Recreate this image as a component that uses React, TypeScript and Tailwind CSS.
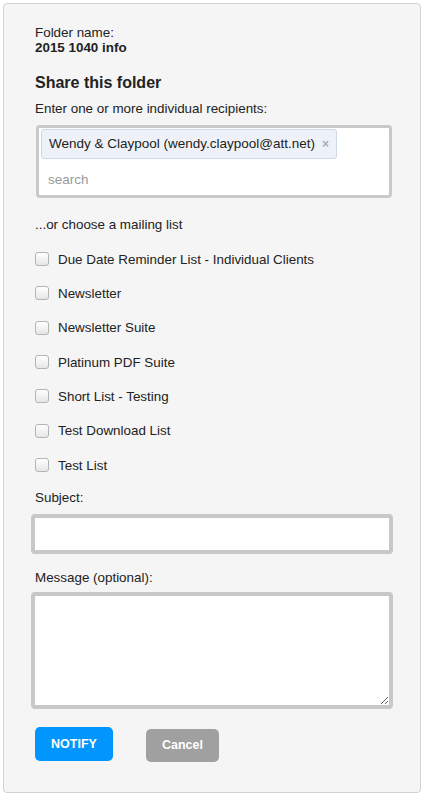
import React from "react";

const lists = [
  "Due Date Reminder List - Individual Clients",
  "Newsletter",
  "Newsletter Suite",
  "Platinum PDF Suite",
  "Short List - Testing",
  "Test Download List",
  "Test List",
];

export default function App() {
  return (
    <div className="w-[425px] h-[795px] bg-white pt-[3px] pl-[3px] font-['Liberation_Sans',Arial,sans-serif] text-[#222]">
      <div className="w-[418px] h-[790px] border border-[#d2d2d2] rounded-[4px] bg-[#f5f5f5] pt-[21px] pl-[31px]">
        <div className="text-[13.4px] leading-[15px]">Folder name:</div>
        <div className="text-[13.4px] leading-[15px] font-bold">2015 1040 info</div>
        <div className="mt-[18px] text-[16px] leading-[20px] font-bold">Share this folder</div>
        <div className="mt-[8px] text-[13.4px] leading-[15px]">Enter one or more individual recipients:</div>
        <div className="mt-[9px] ml-[1px] w-[356px] h-[73px] border-[3px] border-[#c9c9c9] rounded-[4px] bg-white">
          <div className="mt-[1px] ml-[2px] w-[296px] h-[30px] rounded-[3px] border border-[#cfd8e6] bg-[#eef2f8] flex items-center pl-[7px] text-[13.5px]">
            <span>Wendy &amp; Claypool (wendy.claypool@att.net)</span>
            <span className="ml-[7px] text-[12px] font-bold text-[#a2aec0]">×</span>
          </div>
          <div className="mt-[13px] ml-[9px] text-[13.5px] leading-[15px] text-[#9a9a9a]">search</div>
        </div>
        <div className="mt-[19px] text-[13.4px] leading-[15px]">...or choose a mailing list</div>
        <div className="mt-[10px]">
          {lists.map((l) => (
            <div key={l} className="h-[34.33px] flex items-center">
              <span className="w-[14px] h-[14px] rounded-[3px] border border-[#b4b4b4] bg-gradient-to-b from-white to-[#e6e6e6] shrink-0" />
              <span className="ml-[9px] text-[13.4px] leading-[15px]">{l}</span>
            </div>
          ))}
        </div>
        <div className="mt-[8px] text-[13.4px] leading-[15px]">Subject:</div>
        <input
          type="text"
          className="block mt-[9px] -ml-[4px] w-[362px] h-[40px] border-[4px] border-[#c8c8c8] rounded-[4px] bg-white outline-none"
        />
        <div className="mt-[16px] text-[13.4px] leading-[15px]">Message (optional):</div>
        <textarea className="block mt-[7px] -ml-[4px] w-[362px] h-[117px] border-[4px] border-[#c8c8c8] rounded-[4px] bg-white outline-none" />
        <div className="mt-[18px] flex items-start">
          <button className="w-[78px] h-[34px] rounded-[5px] bg-[#0096fb] text-white text-[12.5px] font-bold">NOTIFY</button>
          <button className="ml-[33px] mt-[2px] w-[73px] h-[33px] rounded-[5px] bg-[#a0a0a0] text-white text-[12.5px] font-bold">Cancel</button>
        </div>
      </div>
    </div>
  );
}
